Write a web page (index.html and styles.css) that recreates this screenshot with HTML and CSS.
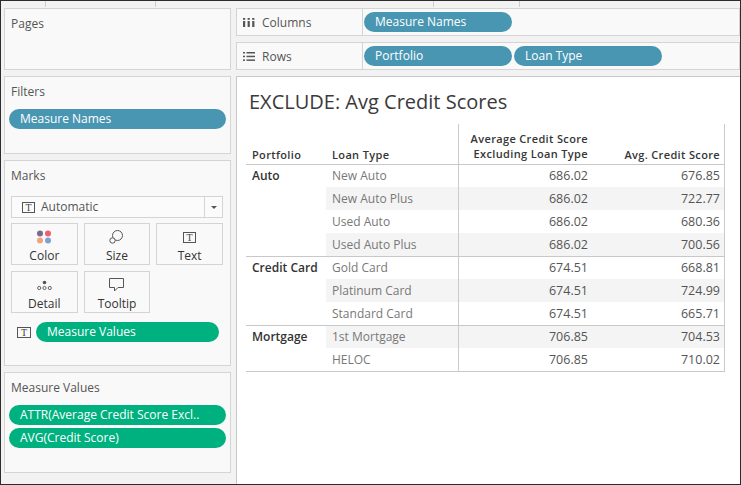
FILE: index.html
```html
<!DOCTYPE html>
<html lang="en">
<head>
<meta charset="utf-8">
<title>EXCLUDE: Avg Credit Scores</title>
<link rel="stylesheet" href="styles.css">
</head>
<body>
<div class="frame">
  <div class="topstrip">
    <span class="tick t1"></span><span class="tick t2"></span><span class="tick t3"></span><span class="tick t4"></span>
  </div>
  <div class="main">
    <aside class="side">
      <section class="card pages"><div class="card-title">Pages</div></section>
      <section class="card filters">
        <div class="card-title">Filters</div>
        <div class="pill dim first">Measure Names</div>
      </section>
      <section class="card marks">
        <div class="card-title">Marks</div>
        <div class="dropdown">
          <span class="t-icon">T</span>
          <span class="dd-text">Automatic</span>
          <span class="dd-arrow"><span class="tri"></span></span>
        </div>
        <div class="mk-grid">
          <div class="mk-btn">
            <span class="mk-icon">
              <svg width="14" height="14" viewBox="0 0 14 14"><circle cx="3" cy="3.5" r="3" fill="#7b6a8c"/><circle cx="11" cy="3.5" r="3" fill="#ef5f6e"/><circle cx="3" cy="10.5" r="3" fill="#f2a37c"/><circle cx="11" cy="10.5" r="3" fill="#7ea2cd"/></svg>
            </span>
            <span class="mk-label">Color</span>
          </div>
          <div class="mk-btn">
            <span class="mk-icon">
              <svg width="15" height="14" viewBox="0 0 15 14"><circle cx="8.5" cy="5.5" r="5" fill="none" stroke="#555" stroke-width="1"/><circle cx="3.5" cy="10.5" r="2.7" fill="#f9f9f9" stroke="#555" stroke-width="1"/></svg>
            </span>
            <span class="mk-label">Size</span>
          </div>
          <div class="mk-btn">
            <span class="mk-icon"><span class="t-icon">T</span></span>
            <span class="mk-label">Text</span>
          </div>
          <div class="mk-btn">
            <span class="mk-icon">
              <svg width="15" height="14" viewBox="0 0 15 14"><circle cx="7.5" cy="4.5" r="1.8" fill="#555"/><circle cx="2.2" cy="10" r="1.6" fill="none" stroke="#555" stroke-width="0.9"/><circle cx="7.5" cy="10" r="1.6" fill="none" stroke="#555" stroke-width="0.9"/><circle cx="12.8" cy="10" r="1.6" fill="none" stroke="#555" stroke-width="0.9"/></svg>
            </span>
            <span class="mk-label">Detail</span>
          </div>
          <div class="mk-btn">
            <span class="mk-icon">
              <svg width="15" height="14" viewBox="0 0 15 14"><path d="M0.5 0.5 H14.5 V9.5 H9 L5.5 13 V9.5 H0.5 Z" fill="none" stroke="#555" stroke-width="1" stroke-linejoin="round"/></svg>
            </span>
            <span class="mk-label">Tooltip</span>
          </div>
        </div>
        <div class="mv-row">
          <span class="t-icon">T</span>
          <div class="pill mea">Measure Values</div>
        </div>
      </section>
      <section class="card mv">
        <div class="card-title">Measure Values</div>
        <div class="pill mea first">ATTR(Average Credit Score Excl..</div>
        <div class="pill mea second">AVG(Credit Score)</div>
      </section>
    </aside>

    <div class="work">
      <div class="shelf">
        <div class="shelf-label">
          <svg class="shelf-icon" width="12" height="9" viewBox="0 0 12 9"><rect x="0" y="0" width="2.2" height="1.8" fill="#555"/><rect x="0" y="3" width="2.2" height="6" fill="#555"/><rect x="4.6" y="0" width="2.2" height="1.8" fill="#555"/><rect x="4.6" y="3" width="2.2" height="6" fill="#555"/><rect x="9.2" y="0" width="2.2" height="1.8" fill="#555"/><rect x="9.2" y="3" width="2.2" height="6" fill="#555"/></svg>
          <span>Columns</span>
        </div>
        <div class="shelf-pills">
          <div class="pill dim shelf-pill">Measure Names</div>
        </div>
      </div>
      <div class="shelf">
        <div class="shelf-label">
          <svg class="shelf-icon" width="12" height="9" viewBox="0 0 12 9"><rect x="0" y="0" width="2" height="1.5" fill="#555"/><rect x="3.5" y="0" width="8.5" height="1.5" fill="#555"/><rect x="0" y="3.7" width="2" height="1.5" fill="#555"/><rect x="3.5" y="3.7" width="8.5" height="1.5" fill="#555"/><rect x="0" y="7.4" width="2" height="1.5" fill="#555"/><rect x="3.5" y="7.4" width="8.5" height="1.5" fill="#555"/></svg>
          <span>Rows</span>
        </div>
        <div class="shelf-pills">
          <div class="pill dim shelf-pill">Portfolio</div>
          <div class="pill dim shelf-pill">Loan Type</div>
        </div>
      </div>

      <div class="view">
        <h1 class="title">EXCLUDE: Avg Credit Scores</h1>
        <div class="tbl">
          <div class="th-row">
            <div class="th pf">Portfolio</div>
            <div class="th lt">Loan Type</div>
            <div class="th v1 two">Average Credit Score<br>Excluding Loan Type</div>
            <div class="th v2">Avg. Credit Score</div>
          </div>

          <div class="group">
            <div class="pf-cell">Auto</div>
            <div class="rows">
              <div class="row"><span class="lt">New Auto</span><span class="v1">686.02</span><span class="v2">676.85</span></div>
              <div class="row band"><span class="lt">New Auto Plus</span><span class="v1">686.02</span><span class="v2">722.77</span></div>
              <div class="row"><span class="lt">Used Auto</span><span class="v1">686.02</span><span class="v2">680.36</span></div>
              <div class="row band"><span class="lt">Used Auto Plus</span><span class="v1">686.02</span><span class="v2">700.56</span></div>
            </div>
          </div>

          <div class="group">
            <div class="pf-cell">Credit Card</div>
            <div class="rows">
              <div class="row"><span class="lt">Gold Card</span><span class="v1">674.51</span><span class="v2">668.81</span></div>
              <div class="row band"><span class="lt">Platinum Card</span><span class="v1">674.51</span><span class="v2">724.99</span></div>
              <div class="row"><span class="lt">Standard Card</span><span class="v1">674.51</span><span class="v2">665.71</span></div>
            </div>
          </div>

          <div class="group">
            <div class="pf-cell">Mortgage</div>
            <div class="rows">
              <div class="row band"><span class="lt">1st Mortgage</span><span class="v1">706.85</span><span class="v2">704.53</span></div>
              <div class="row"><span class="lt">HELOC</span><span class="v1">706.85</span><span class="v2">710.02</span></div>
            </div>
          </div>
        </div>
      </div>
    </div>
  </div>
</div>
</body>
</html>
```

FILE: styles.css
```css
* { box-sizing: border-box; }

body {
  margin: 0;
}

.frame {
  width: 741px;
  height: 485px;
  border: 1px solid #2c2c2c;
  background: #f2f2f2;
  display: flex;
  flex-direction: column;
  font-family: "Open Sans", "Liberation Sans", sans-serif;
  font-size: 12px;
  overflow: hidden;
}

/* top strip with small column ticks */
.topstrip {
  height: 7px;
  flex: none;
  display: flex;
}
.tick {
  width: 1px;
  height: 6px;
  background: #cfcfcf;
}
.t1 { margin-left: 44px; }
.t2 { margin-left: 109px; }
.t3 { margin-left: 277px; }
.t4 { margin-left: 85px; }

.main {
  flex: 1;
  display: flex;
  min-height: 0;
}

/* ---------- left side cards ---------- */
.side {
  width: 235px;
  flex: none;
  padding: 0 5px 0 3px;
  display: flex;
  flex-direction: column;
  gap: 6px;
}

.card {
  background: #f9f9f9;
  border: 1px solid #d4d4d4;
  padding-top: 7px;
  flex: none;
}
.pages { height: 62px; }
.filters { height: 78px; }
.marks { height: 206px; }
.mv { height: 101px; }

.card-title {
  padding-left: 6px;
  line-height: 15px;
  color: #555;
}

.pill {
  height: 20px;
  border-radius: 10px;
  color: #fff;
  padding-left: 11px;
  line-height: 20px;
  white-space: nowrap;
  overflow: hidden;
}
.dim { background: #4996b2; }
.mea { background: #00b180; }

.filters .first,
.mv .first { margin: 10px 4px 0; }
.mv .second { margin: 3px 4px 0; }

/* marks */
.dropdown {
  margin: 13px 7px 0 6px;
  height: 22px;
  border: 1px solid #d4d4d4;
  background: #fbfbfb;
  display: flex;
  align-items: center;
  padding-left: 10px;
}
.t-icon {
  display: inline-block;
  flex: none;
  width: 13px;
  height: 11px;
  border: 1px solid #555;
  font-family: "Liberation Serif", serif;
  font-size: 10px;
  line-height: 9px;
  text-align: center;
  color: #444;
}
.dd-text {
  flex: 1;
  margin-left: 6px;
  color: #555;
  line-height: 20px;
}
.dd-arrow {
  width: 18px;
  height: 100%;
  border-left: 1px solid #d4d4d4;
  display: flex;
  align-items: center;
  justify-content: center;
}
.tri {
  width: 0;
  height: 0;
  border-left: 3px solid transparent;
  border-right: 3px solid transparent;
  border-top: 3px solid #555;
}

.mk-grid {
  margin: 5px 7px 0 6px;
  display: grid;
  grid-template-columns: repeat(3, 1fr);
  gap: 6px;
}
.mk-btn {
  height: 42px;
  border: 1px solid #d4d4d4;
  display: flex;
  flex-direction: column;
  align-items: center;
  padding-top: 6px;
}
.mk-icon {
  height: 14px;
  display: flex;
  align-items: center;
  justify-content: center;
}
.mk-icon svg { display: block; }
.mk-label {
  margin-top: 5px;
  line-height: 14px;
  color: #333;
}

.mv-row {
  margin: 9px 11px 0 12px;
  display: flex;
  align-items: center;
  gap: 5px;
}
.mv-row .t-icon { width: 14px; }
.mv-row .pill { flex: 1; }

/* ---------- work area ---------- */
.work {
  flex: 1;
  min-width: 0;
  display: flex;
  flex-direction: column;
}

.shelf {
  flex: none;
  height: 28px;
  margin-bottom: 6px;
  border: 1px solid #d4d4d4;
  background: #f9f9f9;
  display: flex;
}
.shelf-label {
  width: 126px;
  flex: none;
  border-right: 1px solid #d4d4d4;
  display: flex;
  align-items: center;
  padding-left: 6px;
  gap: 7px;
  color: #555;
}
.shelf-icon { display: block; }
.shelf-pills {
  display: flex;
  align-items: center;
  gap: 2px;
  padding-left: 1px;
}
.shelf-pill { width: 148px; }

.view {
  flex: 1;
  background: #fff;
  border-top: 1px solid #c8c8c8;
  border-left: 1px solid #c8c8c8;
  padding-top: 11px;
}

.title {
  margin: 0;
  padding-left: 12px;
  font-size: 20px;
  line-height: 27px;
  font-weight: 400;
  color: #3a3a3a;
}

/* table */
.tbl {
  margin: 9px 0 0 9px;
  width: 479px;
  border-right: 1px solid #cbcbcb;
}
.th-row {
  display: grid;
  grid-template-columns: 80px 132px 134px 132px;
  height: 41px;
  border-bottom: 1px solid #c8c8c8;
}
.th {
  display: flex;
  align-items: flex-end;
  padding-bottom: 2px;
  font-size: 11px;
  letter-spacing: 0.35px;
  line-height: 15px;
  font-weight: 600;
  color: #363636;
  white-space: nowrap;
}
.th.pf, .th.lt { padding-left: 6px; }
.th.v1, .th.v2 {
  justify-content: flex-end;
  text-align: right;
  padding-right: 4px;
}
.th.v1 { border-left: 1px solid #cbcbcb; }
.th.two { padding-bottom: 3px; }

.group {
  display: flex;
  border-bottom: 1px solid #c8c8c8;
}
.pf-cell {
  width: 80px;
  flex: none;
  padding-left: 6px;
  line-height: 22px;
  font-weight: 600;
  color: #333;
}
.rows { flex: 1; }
.row {
  display: grid;
  grid-template-columns: 132px 134px 132px;
  height: 23px;
  line-height: 23px;
}
.row:first-child {
  height: 22px;
  line-height: 22px;
}
.row.band { background: #f4f4f4; }
.row .lt {
  padding-left: 6px;
  color: #787878;
}
.row .v1,
.row .v2 {
  text-align: right;
  padding-right: 4px;
  color: #555;
  font-size: 12.5px;
}
.row .v1 { border-left: 1px solid #cbcbcb; }
```
